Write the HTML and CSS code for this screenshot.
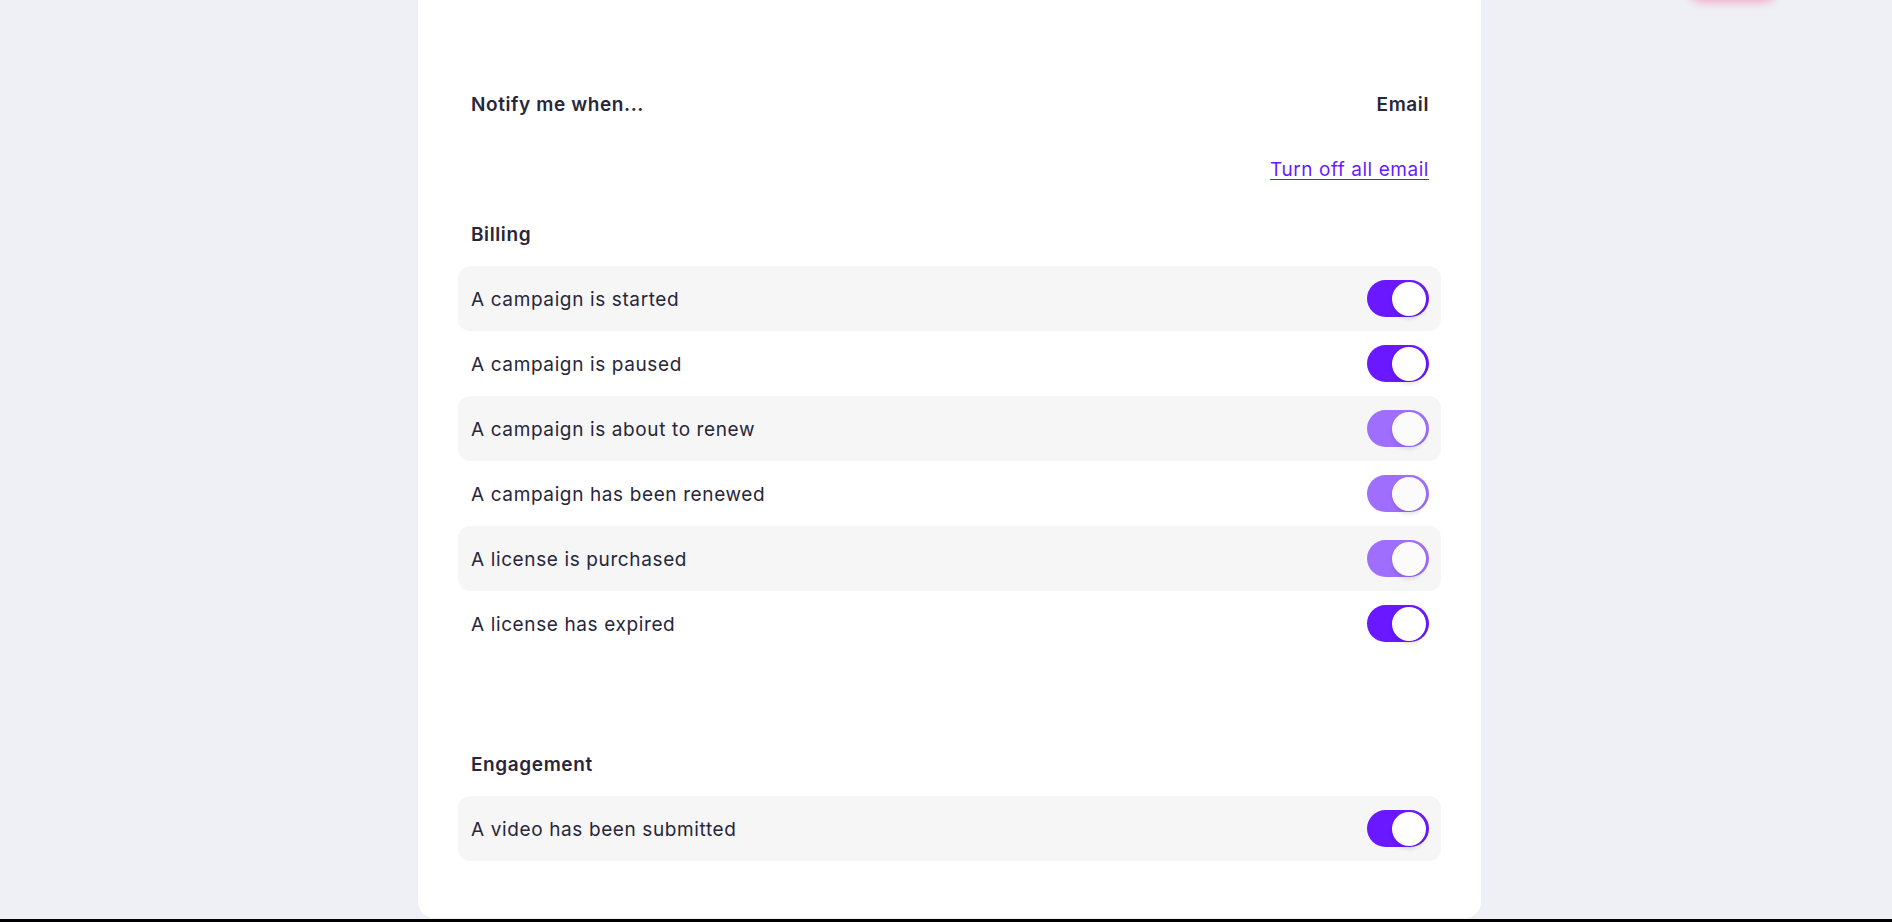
FILE: index.html
```html
<!DOCTYPE html>
<html lang="en">
<head>
<meta charset="utf-8">
<title>Notifications</title>
<link rel="stylesheet" href="styles.css">
</head>
<body>
<div class="page">
  <div class="blob"></div>
  <main class="card">
    <div class="head-row">
      <span class="head">Notify me when...</span>
      <span class="head">Email</span>
    </div>
    <div class="link-row"><a href="#" class="link">Turn off all email</a></div>

    <section class="group">
      <h3 class="group-title">Billing</h3>
      <div class="rows">
        <div class="row"><span class="label">A campaign is started</span><span class="toggle"><span class="knob"></span></span></div>
        <div class="row"><span class="label">A campaign is paused</span><span class="toggle"><span class="knob"></span></span></div>
        <div class="row"><span class="label">A campaign is about to renew</span><span class="toggle dim"><span class="knob"></span></span></div>
        <div class="row"><span class="label">A campaign has been renewed</span><span class="toggle dim"><span class="knob"></span></span></div>
        <div class="row"><span class="label">A license is purchased</span><span class="toggle dim"><span class="knob"></span></span></div>
        <div class="row"><span class="label">A license has expired</span><span class="toggle"><span class="knob"></span></span></div>
      </div>
    </section>

    <section class="group engagement">
      <h3 class="group-title">Engagement</h3>
      <div class="rows">
        <div class="row"><span class="label">A video has been submitted</span><span class="toggle"><span class="knob"></span></span></div>
      </div>
    </section>
  </main>
</div>
<div class="bottom-line"></div>
</body>
</html>
```
FILE: styles.css
```css
html, body {
  margin: 0;
  padding: 0;
}
body {
  background: #eff0f5;
  font-family: "Inter", "Noto Sans", sans-serif;
  color: #27263a;
  overflow: hidden;
}
.page {
  position: relative;
  height: 919px;
  overflow: hidden;
  display: flex;
  justify-content: center;
}
.blob {
  position: absolute;
  left: 1690px;
  top: -22px;
  width: 86px;
  height: 24px;
  border-radius: 12px;
  background: #f3a6c6;
  filter: blur(5px);
}
.card {
  width: 1063px;
  box-sizing: border-box;
  margin-left: 7px;
  margin-top: -20px;
  height: 938px;
  background: #ffffff;
  border-radius: 16px;
  padding: 112px 40px 0;
}
.head-row {
  display: flex;
  justify-content: space-between;
  padding: 0 13px;
  line-height: 26px;
}
.head {
  font-size: 19px;
  font-weight: 600;
  letter-spacing: 0.6px;
}
.head:last-child {
  margin-right: -1px;
}
.link-row {
  display: flex;
  justify-content: flex-end;
  padding: 0 12px 0 13px;
  margin-top: 39px;
  line-height: 26px;
}
.link {
  font-size: 19px;
  letter-spacing: 0.55px;
  color: #6a19ff;
  text-decoration: underline;
  text-underline-offset: 3px;
}
.group-title {
  margin: 39px 0 18px;
  padding: 0 13px;
  font-size: 19px;
  font-weight: 600;
  letter-spacing: 0.6px;
  line-height: 26px;
}
.engagement .group-title {
  margin-top: 96px;
}
.rows {
  display: flex;
  flex-direction: column;
}
.row {
  height: 65px;
  display: flex;
  align-items: center;
  justify-content: space-between;
  padding: 0 12px 0 13px;
  border-radius: 12px;
  font-size: 19px;
  letter-spacing: 0.62px;
}
.label {
  padding-top: 2px;
}
.rows .row:nth-child(odd) {
  background: #f6f6f7;
}
.toggle {
  width: 62px;
  height: 37px;
  border-radius: 19px;
  background: #6a18ff;
  display: flex;
  align-items: center;
  justify-content: flex-end;
  padding-right: 3px;
  box-sizing: border-box;
}
.toggle.dim {
  background: #a06efd;
}
.knob {
  width: 34px;
  height: 34px;
  border-radius: 50%;
  background: #ffffff;
  box-shadow: 0 3px 4px rgba(0, 0, 0, 0.12);
}
.toggle.dim .knob {
  background: #fbfbfc;
}
.bottom-line {
  height: 3px;
  background: #000;
}
```
